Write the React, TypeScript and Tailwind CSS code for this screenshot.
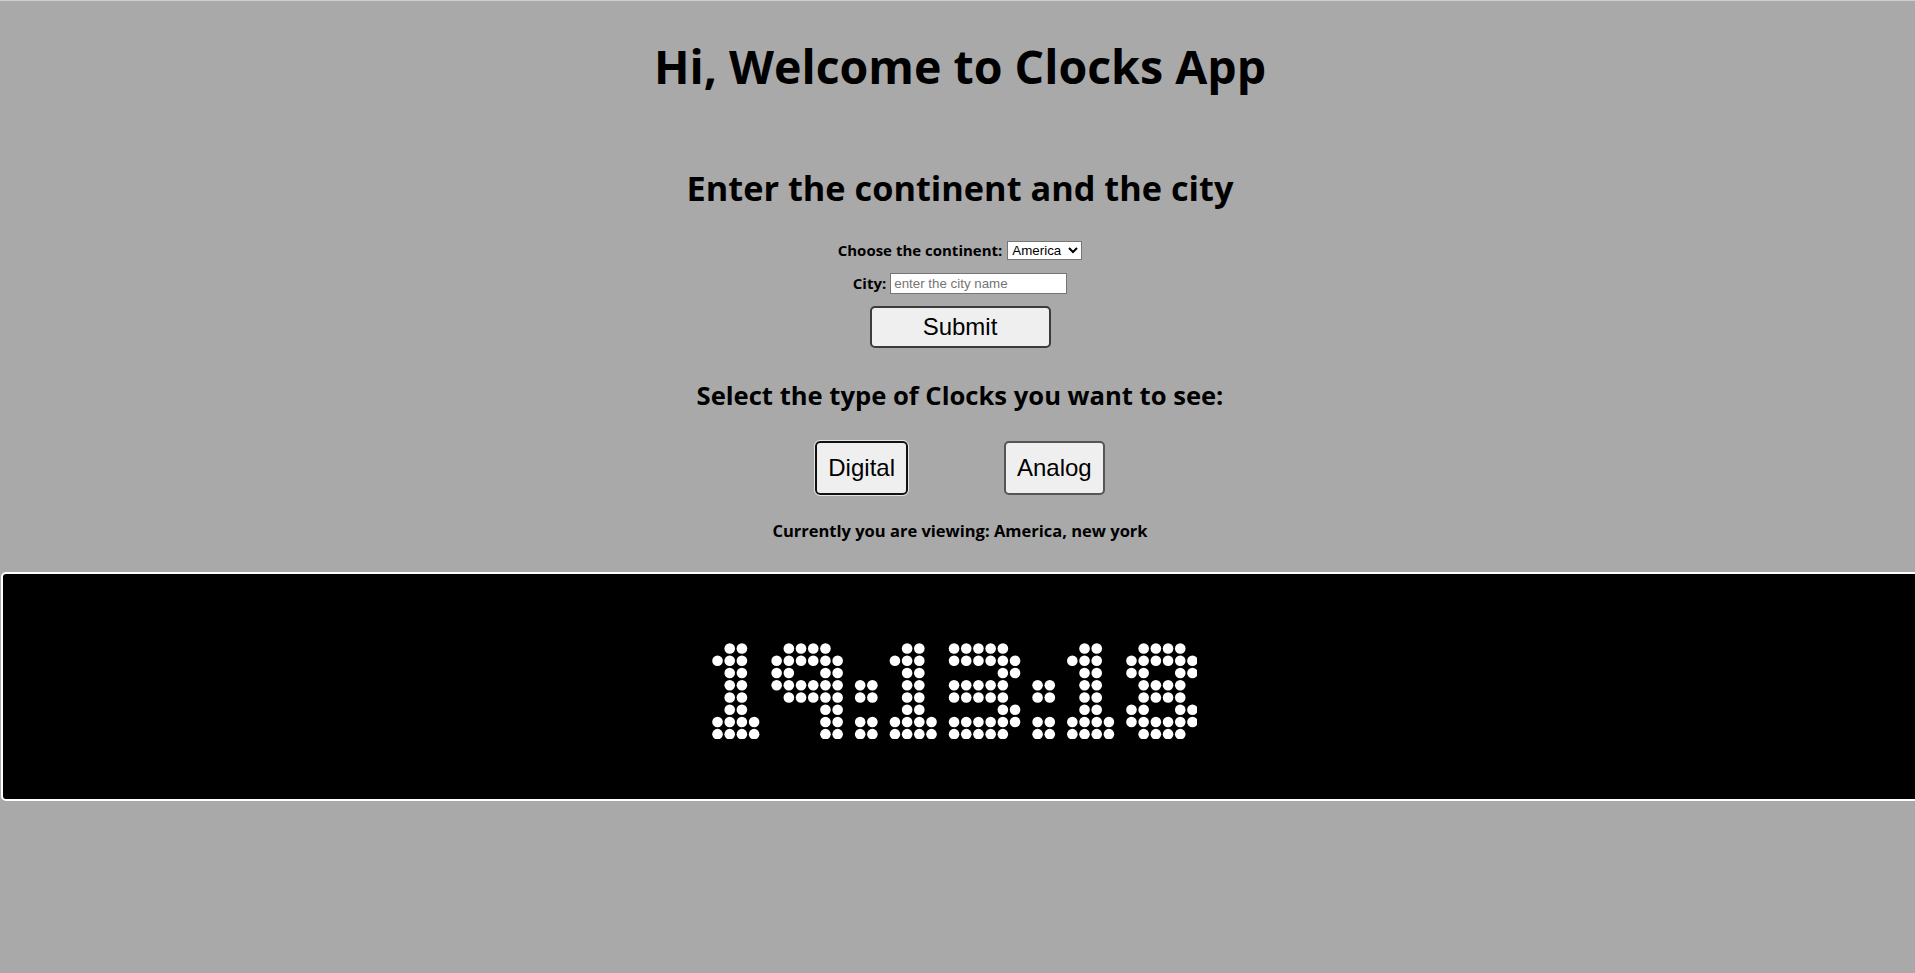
import { useState } from 'react'

const GLYPHS: Record<string, string[]> = {
  '1': ['.XX.', 'XXX.', '.XX.', '.XX.', '.XX.', '.XX.', 'XXXX', 'XXXX'],
  '3': ['XXXXX.', 'XXXXXX', '....XX', 'XXXXX.', 'XXXXX.', '....XX', 'XXXXXX', 'XXXXX.'],
  '8': ['.XXXX.', 'XXXXXX', 'XX..XX', '.XXXX.', '.XXXX.', 'XX..XX', 'XXXXXX', '.XXXX.'],
  '9': ['.XXXX.', 'XXXXXX', 'XX..XX', 'XXXXXX', '.XXXXX', '....XX', '....XX', '....XX'],
  ':': ['..', '..', '..', 'XX', 'XX', '..', 'XX', 'XX'],
}

const PITCH_X = 12.2
const PITCH_Y = 12.24
const GAP = 22.54
const R = 5.3
const PAD = 5.5

function DotClock({ time }: { time: string }) {
  const dots: { cx: number; cy: number }[] = []
  let x = PAD
  for (const ch of time) {
    const glyph = GLYPHS[ch]
    if (!glyph) continue
    glyph.forEach((row, r) => {
      row.split('').forEach((c, ci) => {
        if (c === 'X') dots.push({ cx: x + ci * PITCH_X, cy: PAD + r * PITCH_Y })
      })
    })
    x += (glyph[0].length - 1) * PITCH_X + GAP
  }
  const width = x - GAP + PAD
  const height = PAD * 2 + 7 * PITCH_Y

  return (
    <svg width={width} height={height} viewBox={`0 0 ${width} ${height}`} aria-label={time}>
      {dots.map((d, i) => (
        <circle key={i} cx={d.cx} cy={d.cy} r={R} fill="#fff" />
      ))}
    </svg>
  )
}

export default function App() {
  const [continent, setContinent] = useState('America')
  const [city, setCity] = useState('')
  const [mode, setMode] = useState<'digital' | 'analog'>('digital')

  return (
    <div className="min-h-screen w-full overflow-hidden border-t border-[#cfcfcf] bg-[#a9a9a9] font-['Open_Sans',sans-serif] text-black">
      <div className="flex flex-col items-center pl-[5px]">
        <h1 className="mt-[41.7px] text-[46.5px] font-bold leading-none">Hi, Welcome to Clocks App</h1>

        <h2 className="mt-[81.6px] text-[34.3px] font-bold leading-none">Enter the continent and the city</h2>

        <form className="flex flex-col items-center" onSubmit={(e) => e.preventDefault()}>
          <div className="mt-[35.8px] flex h-[20px] items-center gap-[5px]">
            <label className="text-[15px] font-bold leading-none">Choose the continent:</label>
            <select
              value={continent}
              onChange={(e) => setContinent(e.target.value)}
              className="h-[19px] w-[75px] border border-[#767676] bg-white font-['Liberation_Sans',Arial,sans-serif] text-[13.33px] leading-none"
            >
              <option>America</option>
              <option>Europe</option>
              <option>Asia</option>
              <option>Africa</option>
              <option>Australia</option>
            </select>
          </div>

          <div className="mt-[12.5px] flex h-[21px] items-center gap-[4px]">
            <label className="text-[15px] font-bold leading-none">City:</label>
            <input
              value={city}
              onChange={(e) => setCity(e.target.value)}
              placeholder="enter the city name"
              className="h-[21px] w-[177px] border border-[#767676] bg-white px-[3px] font-['Liberation_Sans',Arial,sans-serif] text-[13.33px] placeholder:text-[#757575]"
            />
          </div>

          <button
            type="submit"
            className="mt-[12px] h-[42px] w-[181px] rounded-[5px] border-2 border-[#3b3b3b] bg-[#efefef] font-['Liberation_Sans',Arial,sans-serif] text-[24px]"
          >
            Submit
          </button>
        </form>

        <h3 className="mt-[34.8px] text-[25.6px] font-bold leading-none">Select the type of Clocks you want to see:</h3>

        <div className="mt-[32.6px] flex items-center gap-[96px]">
          <button
            onClick={() => setMode('digital')}
            className={
              mode === 'digital'
                ? "h-[54px] rounded-[5px] border-2 border-[#111] bg-[#efefef] px-[11px] font-['Liberation_Sans',Arial,sans-serif] text-[24px] outline outline-1 outline-[#e6e6e6]"
                : "h-[54px] rounded-[5px] border-2 border-[#555] bg-[#efefef] px-[11px] font-['Liberation_Sans',Arial,sans-serif] text-[24px]"
            }
          >
            Digital
          </button>
          <button
            onClick={() => setMode('analog')}
            className={
              mode === 'analog'
                ? "h-[54px] rounded-[5px] border-2 border-[#111] bg-[#efefef] px-[11px] font-['Liberation_Sans',Arial,sans-serif] text-[24px] outline outline-1 outline-[#e6e6e6]"
                : "h-[54px] rounded-[5px] border-2 border-[#555] bg-[#efefef] px-[11px] font-['Liberation_Sans',Arial,sans-serif] text-[24px]"
            }
          >
            Analog
          </button>
        </div>

        <p className="mt-[28px] text-[16.5px] font-bold leading-none">
          Currently you are viewing: {continent}, {city || 'new york'}
        </p>
      </div>

      <div className="ml-px mt-[31.8px] w-[1960px] rounded-[5px] border-2 border-white bg-black">
        <div className="flex w-[1903px] justify-center pb-[59.5px] pt-[68.9px]">
          <DotClock time="19:13:18" />
        </div>
      </div>
    </div>
  )
}
